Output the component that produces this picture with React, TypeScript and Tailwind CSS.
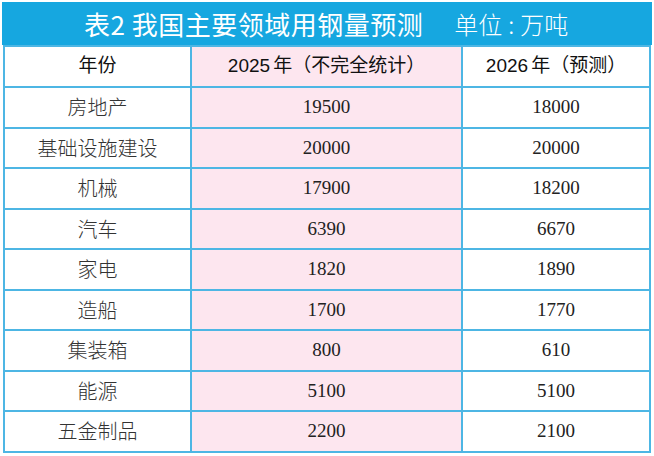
const rows: [string, string, string][] = [
  ["房地产", "19500", "18000"],
  ["基础设施建设", "20000", "20000"],
  ["机械", "17900", "18200"],
  ["汽车", "6390", "6670"],
  ["家电", "1820", "1890"],
  ["造船", "1700", "1770"],
  ["集装箱", "800", "610"],
  ["能源", "5100", "5100"],
  ["五金制品", "2200", "2100"],
];

const sans = "font-['Noto_Sans_CJK_SC','Noto_Sans',sans-serif]";
const headFont = "font-['Liberation_Sans','Noto_Sans_CJK_SC',sans-serif]";

export default function App() {
  return (
    <div className="h-[456px] w-[654px] bg-white pl-[2px] pt-[2px]">
      <div className={`flex h-[43px] w-[650px] items-center bg-[#16a7e0] pl-[82px] text-white ${sans}`}>
        <span className="text-[26px] font-normal leading-none tracking-[0.5px]">表2&nbsp;我国主要领域用钢量预测</span>
        <span className="ml-[31px] text-[24px] font-light leading-none">
          单位<span className="mx-[6px]">:</span>万吨
        </span>
      </div>
      <table className="ml-px w-[648px] table-fixed border-collapse border-2 border-[#4db6e4]">
        <colgroup>
          <col className="w-[187px]" />
          <col className="w-[271px]" />
          <col />
        </colgroup>
        <thead>
          <tr className={`h-[41px] text-[19px] font-normal text-[#111] ${headFont}`}>
            <th className="border-2 border-[#4db6e4] font-normal">年份</th>
            <th className="border-2 border-[#4db6e4] bg-[#fde6ef] font-normal">
              2025<span className="ml-[3px]">年（不完全统计）</span>
            </th>
            <th className="border-2 border-[#4db6e4] font-normal">
              2026<span className="ml-[3px]">年（预测）</span>
            </th>
          </tr>
        </thead>
        <tbody>
          {rows.map(([name, a, b]) => (
            <tr key={name} className="h-[40.5px]">
              <td className={`border-2 border-[#4db6e4] text-center text-[20px] font-light text-[#333] ${sans}`}>{name}</td>
              <td className="border-2 border-[#4db6e4] bg-[#fde6ef] text-center font-['Liberation_Serif',serif] text-[19px] text-[#222]">{a}</td>
              <td className="border-2 border-[#4db6e4] text-center font-['Liberation_Serif',serif] text-[19px] text-[#222]">{b}</td>
            </tr>
          ))}
        </tbody>
      </table>
    </div>
  );
}
